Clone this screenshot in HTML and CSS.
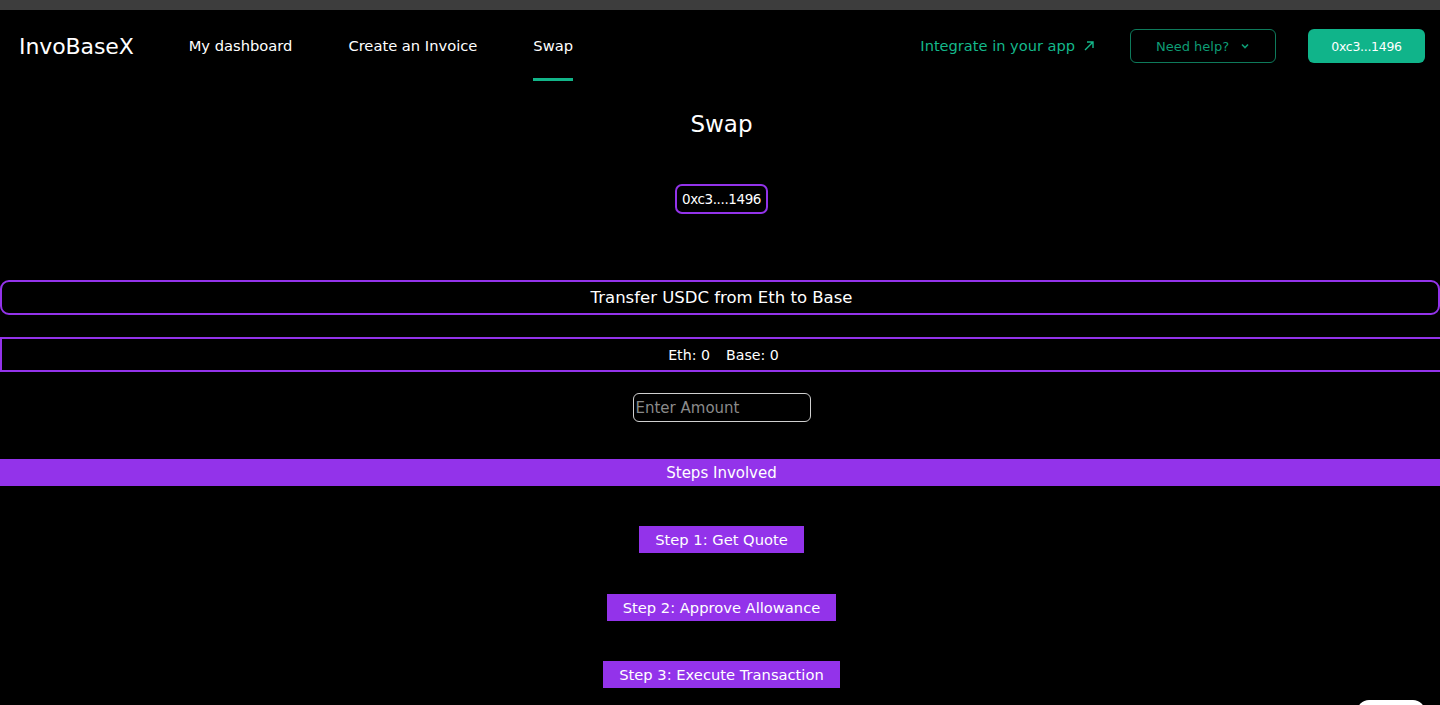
FILE: index.html
```html
<!DOCTYPE html>
<html lang="en">
<head>
<meta charset="utf-8">
<title>InvoBaseX - Swap</title>
<link rel="stylesheet" href="styles.css">
</head>
<body>
<div class="topbar"></div>
<header class="header">
  <div class="left">
    <a class="logo">InvoBaseX</a>
    <nav class="nav">
      <a class="nav-link">My dashboard</a>
      <a class="nav-link">Create an Invoice</a>
      <a class="nav-link active">Swap</a>
    </nav>
  </div>
  <div class="right">
    <a class="integrate">Integrate in your app
      <svg class="arrow" width="12" height="12" viewBox="0 0 12 12"><path d="M2 10 L10 2 M4 2 H10 V8" fill="none" stroke="currentColor" stroke-width="1.4"/></svg>
    </a>
    <button class="help">Need help?
      <svg class="chev" width="10" height="10" viewBox="0 0 10 10"><path d="M2 3.5 L5 6.5 L8 3.5" fill="none" stroke="currentColor" stroke-width="1.6"/></svg>
    </button>
    <button class="wallet">0xc3...1496</button>
  </div>
</header>
<main class="main">
  <h1 class="title">Swap</h1>
  <div class="address">0xc3....1496</div>
  <div class="transfer">Transfer USDC from Eth to Base</div>
  <div class="balances"><span>Eth: 0</span><span>Base: 0</span></div>
  <input class="amount" type="text" placeholder="Enter Amount">
  <div class="steps-bar">Steps Involved</div>
  <div class="steps">
    <button class="step">Step 1: Get Quote</button>
    <button class="step">Step 2: Approve Allowance</button>
    <button class="step">Step 3: Execute Transaction</button>
  </div>
</main>
<div class="widget"></div>
</body>
</html>
```
FILE: styles.css
```css
* { box-sizing: border-box; }
html, body { margin: 0; padding: 0; height: 705px; overflow: hidden; }
body {
  background: #000;
  color: #fff;
  font-family: "DejaVu Sans", sans-serif;
}
a { color: inherit; text-decoration: none; }
button { font-family: inherit; }

.topbar { height: 10px; background: #3d3d3d; }

.header {
  height: 72px;
  display: flex;
  justify-content: space-between;
  align-items: stretch;
  padding: 0 15px 0 19px;
}
.left { display: flex; align-items: stretch; gap: 55px; }
.logo { display: flex; align-items: center; font-size: 22px; letter-spacing: -0.1px; }
.nav { display: flex; gap: 56px; }
.nav-link {
  display: flex;
  align-items: center;
  font-size: 14.7px;
  padding-top: 3px;
  border-bottom: 3px solid transparent;
  margin-bottom: 1px;
}
.nav-link.active { border-bottom-color: #12b589; }

.right { display: flex; align-items: center; }
.integrate {
  color: #14b88b;
  font-size: 14.6px;
  display: flex;
  align-items: center;
  gap: 8px;
  margin-right: 35px;
  padding-bottom: 1px;
}
.help {
  width: 146px;
  height: 34px;
  background: transparent;
  border: 1px solid #0e7a5b;
  border-radius: 6px;
  color: #0e9c74;
  font-size: 13px;
  display: flex;
  align-items: center;
  justify-content: center;
  gap: 11px;
  margin-right: 32px;
}
.wallet {
  width: 117px;
  height: 34px;
  border: none;
  border-radius: 6px;
  background: #10b48a;
  color: #fff;
  font-size: 12.5px;
  letter-spacing: -0.3px;
}

.main { display: flex; flex-direction: column; align-items: center; }
.title {
  margin: 28px 0 0 3px;
  font-weight: 400;
  font-size: 23px;
  line-height: 28px;
}
.address {
  margin: 46px 0 0 3px;
  height: 30px;
  padding: 0 5px;
  display: flex;
  align-items: center;
  border: 2px solid #9333ea;
  border-radius: 7px;
  font-size: 13.5px;
  letter-spacing: -0.4px;
}
.transfer {
  margin-top: 66px;
  width: 100%;
  height: 35px;
  border: 2px solid #9333ea;
  border-radius: 9px;
  display: flex;
  align-items: center;
  justify-content: center;
  font-size: 16.5px;
  padding-left: 3px;
}
.balances {
  margin-top: 22px;
  align-self: flex-start;
  width: calc(100% + 4px);
  height: 35px;
  border: 2px solid #9333ea;
  display: flex;
  align-items: center;
  justify-content: center;
  gap: 16px;
  font-size: 14.2px;
  padding-left: 3px;
}
.amount {
  margin: 21px 0 0 3px;
  width: 178px;
  height: 29px;
  background: #000;
  border: 1px solid #d0d0d0;
  border-radius: 6px;
  color: #fff;
  font-family: inherit;
  font-size: 15px;
  padding: 0 2px;
  outline: none;
}
.amount::placeholder { color: #8a8a8a; }
.steps-bar {
  margin-top: 37px;
  width: 100%;
  height: 27px;
  background: #9333ea;
  display: flex;
  align-items: center;
  justify-content: center;
  font-size: 15px;
  padding-left: 3px;
}
.steps {
  margin: 40px 0 0 3px;
  display: flex;
  flex-direction: column;
  align-items: center;
  gap: 40.5px;
}
.step {
  height: 27px;
  padding: 0 16px;
  background: #9333ea;
  border: none;
  color: #fff;
  font-size: 14.7px;
}
.widget {
  position: fixed;
  right: 15px;
  bottom: -20px;
  width: 68px;
  height: 25px;
  background: #fff;
  border-radius: 12px;
}
```
